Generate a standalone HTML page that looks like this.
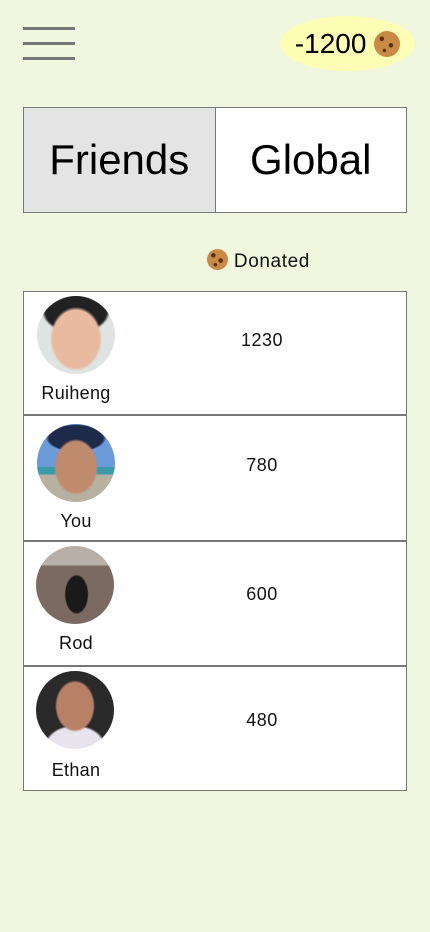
<!DOCTYPE html>
<html><head><meta charset="utf-8"><style>
body{margin:0;width:430px;height:932px;background:#f1f6df;font-family:"Liberation Sans",sans-serif;position:relative;overflow:hidden}
.ab{position:absolute}
.hl{position:absolute;left:23px;width:52px;height:3px;background:#777}
.badge{left:280px;top:16px;width:135px;height:55px;border-radius:50%;background:#fdfdb6;font-size:28px;line-height:55px;text-align:center;color:#000}
.tabs{left:23px;top:107px;width:382px;height:104px;border:1px solid #777;background:#fff;display:flex}
.tabs div{flex:1;display:flex;align-items:center;justify-content:center;font-size:42px;color:#000}
.tabs div:first-child{background:#e4e4e4;border-right:1px solid #777}
.table{left:23px;top:291px;width:382px;height:498px;border:1px solid #777;background:#fff}
.row{position:absolute;left:0;width:382px;border-bottom:2px solid #777}
.av{position:absolute;left:13px;top:4px;width:78px;height:78px;border-radius:50%;overflow:hidden}
.nm{position:absolute;left:0;width:104px;text-align:center;font-size:18px;color:#111;letter-spacing:0.3px}
.num{position:absolute;left:188px;width:100px;text-align:center;font-size:18px;color:#111;letter-spacing:0.5px}
.ck{display:inline-block;width:20px;height:20px;border-radius:50%;background:radial-gradient(circle at 30% 30%,#5a3014 2px,transparent 2.5px),radial-gradient(circle at 65% 55%,#5a3014 2px,transparent 2.5px),radial-gradient(circle at 40% 75%,#5a3014 1.5px,transparent 2px),#c98a45;vertical-align:-3px}
</style></head><body>
<div class="hl" style="top:27px"></div><div class="hl" style="top:42px"></div><div class="hl" style="top:57px"></div>
<div class="ab badge">-1200 <span class="ck" style="width:26px;height:26px;vertical-align:-4px"></span></div>
<div class="ab tabs"><div>Friends</div><div>Global</div></div>
<div class="ab" style="left:207px;top:249px;font-size:19px;color:#111;letter-spacing:0.6px"><span class="ck" style="width:21px;height:21px"></span> Donated</div>
<div class="ab table">
 <div class="row" style="top:0;height:122px">
  <div class="av" style="background:radial-gradient(ellipse 26px 32px at 50% 55%,#e9b9a0 90%,transparent 100%),radial-gradient(ellipse 34px 22px at 50% 20%,#222 90%,transparent 100%),#dfe3e1"></div>
  <div class="nm" style="top:91px">Ruiheng</div><div class="num" style="top:38px">1230</div>
 </div>
 <div class="row" style="top:124px;height:124px">
  <div class="av" style="top:8px;background:radial-gradient(ellipse 22px 28px at 50% 55%,#c08a6c 90%,transparent 100%),radial-gradient(ellipse 30px 14px at 50% 18%,#1e2a4a 90%,transparent 100%),linear-gradient(#6a9ad8 0 55%,#3a9aa8 55% 65%,#b8b0a0 65%)"></div>
  <div class="nm" style="top:95px">You</div><div class="num" style="top:39px">780</div>
 </div>
 <div class="row" style="top:250px;height:123px">
  <div class="av" style="left:12px;top:4px;background:radial-gradient(ellipse 12px 20px at 52% 62%,#1a1a1a 90%,transparent 100%),linear-gradient(#b8b0a8 0 25%,#7a6a62 25%)"></div>
  <div class="nm" style="top:91px">Rod</div><div class="num" style="top:42px">600</div>
 </div>
 <div class="row" style="top:375px;height:123px;border-bottom:none">
  <div class="av" style="left:12px;top:4px;background:radial-gradient(ellipse 20px 26px at 50% 45%,#b98068 90%,transparent 100%),radial-gradient(ellipse 30px 20px at 50% 95%,#e8e4ee 90%,transparent 100%),#2a2a2a"></div>
  <div class="nm" style="top:93px">Ethan</div><div class="num" style="top:43px">480</div>
 </div>
</div>
</body></html>
